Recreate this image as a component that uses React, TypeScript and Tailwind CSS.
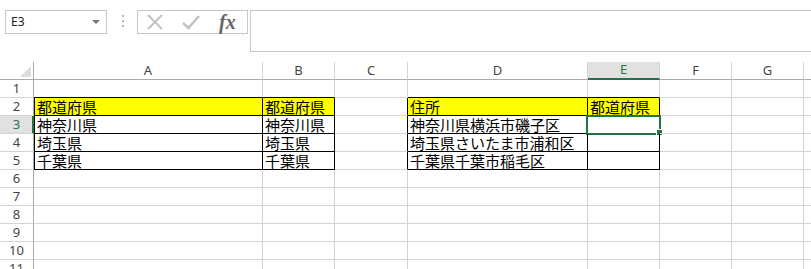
import React from 'react'

const COLS = [
  { key: '', w: 34 },
  { key: 'A', w: 229 },
  { key: 'B', w: 72 },
  { key: 'C', w: 73 },
  { key: 'D', w: 180 },
  { key: 'E', w: 72 },
  { key: 'F', w: 72 },
  { key: 'G', w: 72 },
  { key: '', w: 40 },
]

const DATA: Record<string, string> = {
  A2: '都道府県',
  B2: '都道府県',
  D2: '住所',
  E2: '都道府県',
  A3: '神奈川県',
  B3: '神奈川県',
  D3: '神奈川県横浜市磯子区',
  A4: '埼玉県',
  B4: '埼玉県',
  D4: '埼玉県さいたま市浦和区',
  A5: '千葉県',
  B5: '千葉県',
  D5: '千葉県千葉市稲毛区',
}

const ROWS = [1, 2, 3, 4, 5, 6, 7, 8, 9, 10, 11]

// cells boxed with black borders
function inTable(r: number, c: number) {
  return r >= 2 && r <= 5 && (c === 1 || c === 2 || c === 4 || c === 5)
}

const cellFont = { fontFamily: '"MS PGothic", "Noto Sans CJK JP", sans-serif' }
const headFont = { fontFamily: '"Noto Sans", "Liberation Sans", sans-serif' }

function FormulaBar() {
  return (
    <div className="flex h-[62px] items-start pl-[5px] pt-[10px]">
      <div className="flex h-[24px] w-[102px] items-center justify-between border border-[#c6c6c6] pl-[5px] pr-[6px]">
        <span className="text-[12px] text-[#222]" style={headFont}>
          E3
        </span>
        <span className="h-0 w-0 border-x-[4px] border-t-[4px] border-x-transparent border-t-[#777]" />
      </div>
      <div className="ml-[15px] mt-[5px] flex flex-col gap-[3px]">
        <span className="h-[2px] w-[2px] bg-[#b5b5b5]" />
        <span className="h-[2px] w-[2px] bg-[#b5b5b5]" />
        <span className="h-[2px] w-[2px] bg-[#b5b5b5]" />
      </div>
      <div className="ml-[13px] flex h-[24px] w-[111px] items-center border border-[#c6c6c6]">
        <svg width="20" height="20" viewBox="0 0 20 20" className="ml-[7px]">
          <path d="M3 3 L17 17 M17 3 L3 17" stroke="#c2c2c2" strokeWidth="2" fill="none" />
        </svg>
        <svg width="22" height="20" viewBox="0 0 22 20" className="ml-[15px]">
          <path d="M3 11 L8.5 16 L19 4" stroke="#c2c2c2" strokeWidth="2.6" fill="none" />
        </svg>
        <span
          className="ml-[17px] text-[20px] font-bold italic leading-none text-[#666]"
          style={{ fontFamily: '"Liberation Serif", serif' }}
        >
          fx
        </span>
      </div>
      <div className="ml-[2px] h-[42px] flex-1 border-y border-l border-[#c6c6c6]" />
    </div>
  )
}

function HeaderRow() {
  return (
    <div className="flex h-[18px]">
      {COLS.map((col, c) => {
        if (c === 0)
          return (
            <div
              key="corner"
              className="flex h-[18px] shrink-0 items-end justify-end border-b border-r border-[#ababab] pb-[2px] pr-[2px]"
              style={{ width: col.w }}
            >
              <svg width="11" height="11" viewBox="0 0 11 11">
                <path d="M11 0 L11 11 L0 11 Z" fill="#dcdcdc" />
              </svg>
            </div>
          )
        const sel = col.key === 'E'
        return (
          <div
            key={'h' + c}
            className={
              sel
                ? 'flex h-[18px] shrink-0 items-center justify-center border-b-2 border-r border-b-[#217346] border-r-[#d4d4d4] bg-[#e1e1e1] text-[13px] text-[#217346]'
                : 'flex h-[18px] shrink-0 items-center justify-center border-b border-r border-b-[#ababab] border-r-[#d4d4d4] text-[13px] text-[#444]'
            }
            style={{ width: col.w, ...headFont }}
          >
            {col.key}
          </div>
        )
      })}
    </div>
  )
}

function Row({ r }: { r: number }) {
  return (
    <div className="flex h-[18px]">
      {COLS.map((col, c) => {
        if (c === 0) {
          const sel = r === 3
          return (
            <div
              key="rh"
              className={
                sel
                  ? 'flex h-[18px] shrink-0 items-center justify-center border-b border-r-2 border-b-[#d4d4d4] border-r-[#217346] bg-[#e1e1e1] pl-[1px] text-[13px] leading-[17px] text-[#217346]'
                  : 'flex h-[18px] shrink-0 items-center justify-center border-b border-r border-b-[#d4d4d4] border-r-[#ababab] text-[13px] leading-[17px] text-[#444]'
              }
              style={{ width: col.w, ...headFont }}
            >
              {r}
            </div>
          )
        }
        const id = col.key + r
        const text = DATA[id]
        const inside = inTable(r, c)
        const bottomBlack = inside || inTable(r + 1, c)
        const rightBlack = inside || inTable(r, c + 1)
        const yellow = r === 2 && inside
        const active = id === 'E3'
        return (
          <div
            key={'c' + c}
            className={[
              'relative flex h-[18px] shrink-0 items-end whitespace-nowrap border-b border-r pl-[2px] text-[15px] text-black',
              bottomBlack ? 'border-b-black' : 'border-b-[#d4d4d4]',
              rightBlack ? 'border-r-black' : 'border-r-[#d4d4d4]',
              inside && c === 1 ? 'border-l border-l-black pl-[1px]' : '',
              yellow ? 'bg-[#ffff00]' : '',
            ].join(' ')}
            style={{ width: col.w, ...cellFont }}
          >
            {text && <span className="block leading-[17px]">{text}</span>}
            {active && (
              <>
                <div className="absolute -left-[2px] -top-[1px] h-[20px] w-[75px] border-2 border-[#217346]" />
                <div className="absolute -bottom-[3px] -right-[4px] h-[7px] w-[7px] border border-white bg-[#217346]" />
              </>
            )}
          </div>
        )
      })}
    </div>
  )
}

export default function App() {
  return (
    <div className="h-[269px] w-[811px] overflow-hidden bg-white">
      <FormulaBar />
      <HeaderRow />
      {ROWS.map((r) => (
        <Row key={r} r={r} />
      ))}
    </div>
  )
}
